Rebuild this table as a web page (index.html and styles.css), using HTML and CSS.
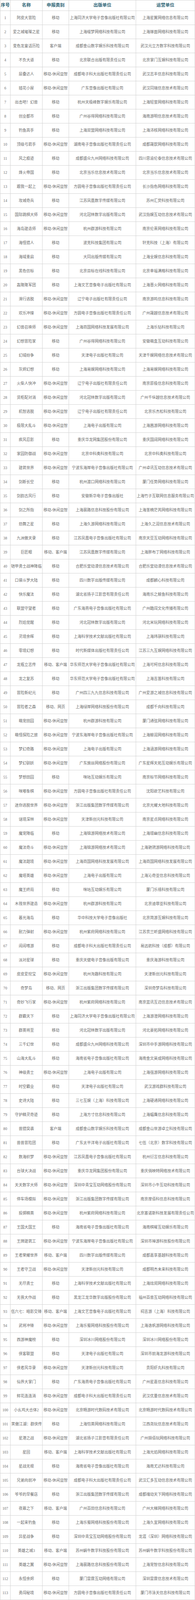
FILE: index.html
```html
<!DOCTYPE html>
<html lang="zh-CN">
<head>
<meta charset="utf-8">
<title>游戏审批名单</title>
<link rel="stylesheet" href="styles.css">
</head>
<body>
<table class="sheet">
<thead>
<tr class="head"><th>序号</th><th>名称</th><th>申报类别</th><th>出版单位</th><th>运营单位</th></tr>
</thead>
<tbody>
<tr><td>1</td><td>阿皮大冒险</td><td>移动</td><td>上海同济大学电子音像出版社有限公司</td><td>上海星翼网络信息有限公司</td></tr>
<tr><td>2</td><td>爱之城璀璨之星</td><td>移动</td><td>上海缇梦网络科技有限公司</td><td>上海琢面网络科技有限公司</td></tr>
<tr><td>3</td><td>变色龙童话历险</td><td>客户端</td><td>成都金山数字娱乐科技有限公司</td><td>武汉元立方数字科技有限公司</td></tr>
<tr><td>4</td><td>不负大道</td><td>移动</td><td>北京联合出版有限责任公司</td><td>北京掌门互娱科技有限公司</td></tr>
<tr><td>5</td><td>层叠达人</td><td>移动-休闲益智</td><td>成都电子科大出版社有限责任公司</td><td>武汉志丰信息科技有限公司</td></tr>
<tr><td>6</td><td>插花小屋</td><td>移动-休闲益智</td><td>广东音像出版社有限公司</td><td>武汉同瑞信息技术有限公司</td></tr>
<tr><td>7</td><td>出击吧！幻兽</td><td>移动</td><td>杭州天极峰数字娱乐有限公司</td><td>上海轻萤网络科技有限公司</td></tr>
<tr><td>8</td><td>创业都市</td><td>移动</td><td>广州谷得网络科技有限公司</td><td>海南游明信息技术有限公司</td></tr>
<tr><td>9</td><td>钓鱼高手</td><td>移动</td><td>上海双盟网络科技有限公司</td><td>上海沛核网络科技有限公司</td></tr>
<tr><td>10</td><td>顶级弓箭手</td><td>移动-休闲益智</td><td>湖南电子音像出版社有限责任公司</td><td>成都晟歆网络科技有限公司</td></tr>
<tr><td>11</td><td>风之痕迹</td><td>移动</td><td>成都盛众九州网络科技有限公司</td><td>四川思渝伦泰信息技术有限公司</td></tr>
<tr><td>12</td><td>烽火帝国</td><td>移动</td><td>北京当乐信息技术有限公司</td><td>北京当乐信息技术有限公司</td></tr>
<tr><td>13</td><td>跟我一起上</td><td>移动-休闲益智</td><td>方圆电子音像出版社有限责任公司</td><td>长沙指色网络科技有限公司</td></tr>
<tr><td>14</td><td>攻城奇兵</td><td>移动</td><td>江苏凤凰数字传媒有限公司</td><td>苏州汇荧科技有限公司</td></tr>
<tr><td>15</td><td>国际跳棋大师</td><td>移动-休闲益智</td><td>河北冠林数字出版有限公司</td><td>武汉指娱互动信息技术有限公司</td></tr>
<tr><td>16</td><td>海岛建造师</td><td>移动-休闲益智</td><td>杭州群游科技有限公司</td><td>南京伦熹网络科技有限公司</td></tr>
<tr><td>17</td><td>海怪猎人</td><td>移动</td><td>波克科技集团有限公司</td><td>轩克科技（上海）有限公司</td></tr>
<tr><td>18</td><td>海域重启</td><td>移动</td><td>大同出版传媒有限公司</td><td>上海全娱信息科技有限公司</td></tr>
<tr><td>19</td><td>黑色信标</td><td>移动</td><td>北京目标在线科技有限公司</td><td>北京幸福满格科技有限公司</td></tr>
<tr><td>20</td><td>轰隆隆军团</td><td>移动</td><td>上海文艺音像电子出版社有限公司</td><td>上海晋火网络科技有限公司</td></tr>
<tr><td>21</td><td>滑行逃脱</td><td>移动-休闲益智</td><td>辽宁电子出版社有限责任公司</td><td>南京游鸣信息科技有限公司</td></tr>
<tr><td>22</td><td>欢乐冲撞</td><td>移动-休闲益智</td><td>方圆电子音像出版社有限责任公司</td><td>广州晟越信息技术有限公司</td></tr>
<tr><td>23</td><td>幻兽召唤师</td><td>移动-休闲益智</td><td>上海商国网络科技发展有限公司</td><td>上海乐钻科技有限公司</td></tr>
<tr><td>24</td><td>幻想冒险家</td><td>移动</td><td>广州谷得网络科技有限公司</td><td>安徽萌盒互动科技有限公司</td></tr>
<tr><td>25</td><td>幻域纷争</td><td>移动</td><td>天津电子出版社有限公司</td><td>天津千娱网络信息技术有限公司</td></tr>
<tr><td>26</td><td>灰烬幻想</td><td>移动</td><td>上海易娱网络科技有限公司</td><td>上海易娱网络科技有限公司</td></tr>
<tr><td>27</td><td>火柴人快冲</td><td>移动-休闲益智</td><td>辽宁电子出版社有限责任公司</td><td>南京原极信息科技有限公司</td></tr>
<tr><td>28</td><td>货柜配对消</td><td>移动-休闲益智</td><td>河北冠林数字出版有限公司</td><td>广州千纵越信息技术有限公司</td></tr>
<tr><td>29</td><td>机智逃脱</td><td>移动-休闲益智</td><td>辽宁电子出版社有限责任公司</td><td>北京乐杰松科技有限公司</td></tr>
<tr><td>30</td><td>极限大乱斗</td><td>移动-休闲益智</td><td>上海电子出版有限公司</td><td>上海茜游网络科技有限公司</td></tr>
<tr><td>31</td><td>疾风忍影</td><td>移动</td><td>重庆华龙网集团股份有限公司</td><td>重庆国阔网络科技有限公司</td></tr>
<tr><td>32</td><td>家园防御战</td><td>移动-休闲益智</td><td>北京中科奥科技有限公司</td><td>北京中科奥科技有限公司</td></tr>
<tr><td>33</td><td>建筑世界</td><td>移动-休闲益智</td><td>宁波东海岸电子音像出版社有限公司</td><td>广州卓讯互动信息技术有限公司</td></tr>
<tr><td>34</td><td>剑断长空</td><td>移动</td><td>杭州渡口网络科技有限公司</td><td>厦门任势网络科技有限公司</td></tr>
<tr><td>35</td><td>剑韵古风行</td><td>移动</td><td>安徽新华电子音像出版社</td><td>上海竹子互联网信息服务有限公司</td></tr>
<tr><td>36</td><td>剑之所指</td><td>移动-休闲益智</td><td>上海晨路信息科技股份有限公司</td><td>上海茎楠茫芮网络科技有限公司</td></tr>
<tr><td>37</td><td>劲舞之星</td><td>移动</td><td>上海久游网络科技有限公司</td><td>上海久之润信息技术有限公司</td></tr>
<tr><td>38</td><td>九洲傲天录</td><td>移动</td><td>江苏凤凰电子音像出版社有限公司</td><td>南京天豆互动网络科技有限公司</td></tr>
<tr><td>39</td><td>巨匠眼</td><td>移动、客户端</td><td>江苏凤凰数字传媒有限公司</td><td>上海胖布丁网络科技有限公司</td></tr>
<tr><td>40</td><td>铠甲勇士战神降临</td><td>移动</td><td>合肥乐堂动漫信息技术有限公司</td><td>合肥乐堂动漫信息技术有限公司</td></tr>
<tr><td>41</td><td>口袋斗罗大陆</td><td>移动</td><td>四川数字出版传媒有限公司</td><td>成都麟心科技有限公司</td></tr>
<tr><td>42</td><td>快乐魔法</td><td>移动</td><td>湖北省扬子江影音有限责任公司</td><td>海南乐之鲸鱼科技有限公司</td></tr>
<tr><td>43</td><td>联盟守望者</td><td>移动</td><td>广东海燕电子音像出版社有限公司</td><td>广州酷闯文化传播有限公司</td></tr>
<tr><td>44</td><td>烈焰觉醒</td><td>移动</td><td>河北冠林数字出版有限公司</td><td>河北米玩网络科技有限公司</td></tr>
<tr><td>45</td><td>灵境余晖</td><td>移动</td><td>上海科学技术文献出版社有限公司</td><td>上海玮骐科技有限公司</td></tr>
<tr><td>46</td><td>零境幻想</td><td>移动</td><td>时代新媒体出版社有限责任公司</td><td>江苏三九互娱网络科技有限公司</td></tr>
<tr><td>47</td><td>龙瓶立志传</td><td>移动、客户端</td><td>华东师范大学电子音像出版社有限公司</td><td>上海可柯信息科技有限公司</td></tr>
<tr><td>48</td><td>龙之复苏</td><td>移动</td><td>华东师范大学电子音像出版社有限公司</td><td>上海吉笛科技有限公司</td></tr>
<tr><td>49</td><td>冒险新纪元</td><td>移动</td><td>广州四三九九信息科技有限公司</td><td>广州爱游之城信息科技有限公司</td></tr>
<tr><td>50</td><td>冒险者之森</td><td>移动、网页</td><td>上海绿岸网络科技股份有限公司</td><td>成都千向科技有限公司</td></tr>
<tr><td>51</td><td>萌宠田园</td><td>移动-休闲益智</td><td>杭州群游科技有限公司</td><td>厦门通弦网络科技有限公司</td></tr>
<tr><td>52</td><td>萌怪探险之旅</td><td>移动-休闲益智</td><td>宁波东海岸电子音像出版社有限公司</td><td>上海鲸润网络科技有限公司</td></tr>
<tr><td>53</td><td>梦幻奇路</td><td>移动-休闲益智</td><td>上海电子出版有限公司</td><td>上海涵游网络科技有限公司</td></tr>
<tr><td>54</td><td>梦幻驯妖</td><td>移动-休闲益智</td><td>广东施燚网络股份有限公司</td><td>广东星辉天拓互动娱乐有限公司</td></tr>
<tr><td>55</td><td>梦想田园</td><td>移动</td><td>咪咕互动娱乐有限公司</td><td>南京标节网络科技有限公司</td></tr>
<tr><td>56</td><td>咪嘟象棋</td><td>移动-休闲益智</td><td>方圆电子音像出版社有限责任公司</td><td>沈阳欲艺科技有限公司</td></tr>
<tr><td>57</td><td>迷你逃脱世界</td><td>移动-休闲益智</td><td>浙江出版集团数字传媒有限公司</td><td>北京光耀大地科技有限公司</td></tr>
<tr><td>58</td><td>谜境深林</td><td>移动-休闲益智</td><td>天津新创元科技有限公司</td><td>南京星点网络科技有限公司</td></tr>
<tr><td>59</td><td>魔宠降临</td><td>移动</td><td>上海锦游网络技术有限公司</td><td>上海璟幽信息科技有限公司</td></tr>
<tr><td>60</td><td>魔法奇斗</td><td>移动-休闲益智</td><td>上海锦游网络技术有限公司</td><td>上海驰骋游网络科技有限公司</td></tr>
<tr><td>61</td><td>魔法甜境</td><td>移动-休闲益智</td><td>上海商国网络科技发展有限公司</td><td>上海商国网络科技发展有限公司</td></tr>
<tr><td>62</td><td>魔塔英雄</td><td>移动-休闲益智</td><td>上海电子出版有限公司</td><td>上海沁奇亚信息科技有限公司</td></tr>
<tr><td>63</td><td>魔王终局</td><td>移动</td><td>咪咕互动娱乐有限公司</td><td>厦门乐禧科技有限公司</td></tr>
<tr><td>64</td><td>木筏世界建造</td><td>移动-休闲益智</td><td>杭州群游科技有限公司</td><td>北京迪菲亚科技有限公司</td></tr>
<tr><td>65</td><td>暮光海岛</td><td>移动</td><td>华中科技大学电子音像出版社</td><td>北京简游互娱科技有限公司</td></tr>
<tr><td>66</td><td>耐力弹射</td><td>移动-休闲益智</td><td>杭州紫府网络科技有限公司</td><td>江苏贯兰昕盛网络科技有限公司</td></tr>
<tr><td>67</td><td>闹闹嗜游</td><td>移动</td><td>成都电子科大出版社有限责任公司</td><td>易远航科技（成都）有限公司</td></tr>
<tr><td>68</td><td>派对星球</td><td>移动</td><td>重庆天健电子音像出版有限公司</td><td>重庆海游科技有限公司</td></tr>
<tr><td>69</td><td>皮皮爱挖宝</td><td>移动-休闲益智</td><td>杭州洵趣科技有限公司</td><td>天津新创元科技有限公司</td></tr>
<tr><td>70</td><td>奇梦岛</td><td>移动、网页</td><td>浙江出版集团数字传媒有限公司</td><td>深圳奇梦岛科技有限公司</td></tr>
<tr><td>71</td><td>奇妙飞行家</td><td>移动-休闲益智</td><td>杭州紫府网络科技有限公司</td><td>南京蓝讯互迈信息技术有限公司</td></tr>
<tr><td>72</td><td>群霸天下</td><td>移动</td><td>上海同济大学电子音像出版社有限公司</td><td>上海游澄网络科技有限公司</td></tr>
<tr><td>73</td><td>群英将至</td><td>移动</td><td>河北冠林数字出版有限公司</td><td>河北豪拓网络科技有限公司</td></tr>
<tr><td>74</td><td>三千幻世</td><td>移动</td><td>成都盛众九州网络科技有限公司</td><td>深圳市中手游网络科技有限公司</td></tr>
<tr><td>75</td><td>山海大乱斗</td><td>移动</td><td>海南省电子音像出版社有限公司</td><td>海南金文昊成网络科技有限公司</td></tr>
<tr><td>76</td><td>神级勇士</td><td>移动-休闲益智</td><td>上海电子出版有限公司</td><td>上海强游网络科技有限公司</td></tr>
<tr><td>77</td><td>时空霸业</td><td>移动</td><td>天津电子出版社有限公司</td><td>武汉游戏群科技有限公司</td></tr>
<tr><td>78</td><td>史诗大陆</td><td>移动</td><td>三七互娱（上海）科技有限公司</td><td>上海硬通网络科技有限公司</td></tr>
<tr><td>79</td><td>守护精灵奇迹</td><td>移动</td><td>上海方寸信息科技有限公司</td><td>上海蝠鹰信息科技有限公司</td></tr>
<tr><td>80</td><td>兽猎突袭</td><td>客户端</td><td>成都金山数字娱乐科技有限公司</td><td>成都金山世游卓立科技有限公司</td></tr>
<tr><td>81</td><td>兽兽冒险团</td><td>移动</td><td>广东太平洋电子出版社有限公司</td><td>七伍（北京）数字科技有限公司</td></tr>
<tr><td>82</td><td>数海织梦</td><td>移动-休闲益智</td><td>江苏凤凰电子音像出版社有限公司</td><td>杭州衍言信息科技有限公司</td></tr>
<tr><td>83</td><td>台球大决战</td><td>移动-休闲益智</td><td>重庆华龙网集团股份有限公司</td><td>重庆俏映特网络技术有限公司</td></tr>
<tr><td>84</td><td>天天数字大师</td><td>移动-休闲益智</td><td>深圳中青宝互动网络股份有限公司</td><td>深圳市小牛互动科技有限公司</td></tr>
<tr><td>85</td><td>停车场模拟</td><td>移动-休闲益智</td><td>浙江出版集团数字传媒有限公司</td><td>南京摩佰科信息科技有限公司</td></tr>
<tr><td>86</td><td>投掷精英</td><td>移动-休闲益智</td><td>杭州紫府网络科技有限公司</td><td>北京塞诺斯科技发展有限责任公司</td></tr>
<tr><td>87</td><td>王国大国王</td><td>移动</td><td>海南省电子音像出版社有限公司</td><td>海南棋曜互动娱乐有限公司</td></tr>
<tr><td>88</td><td>王牌建筑工</td><td>移动-休闲益智</td><td>宁波东海岸电子音像出版社有限公司</td><td>深圳市禅游科技股份有限公司</td></tr>
<tr><td>89</td><td>王者荣耀世界</td><td>移动、客户端</td><td>四川数字出版传媒有限公司</td><td>成都嘉享基越科技有限公司</td></tr>
<tr><td>90</td><td>王者守卫战</td><td>移动-休闲益智</td><td>天津新创元科技有限公司</td><td>成都明杰未来科技有限公司</td></tr>
<tr><td>91</td><td>无尽勇士</td><td>移动</td><td>上海科学技术文献出版社有限公司</td><td>上海炫闵网络科技有限公司</td></tr>
<tr><td>92</td><td>无畏大作战</td><td>移动</td><td>黑龙江龙华数字出版股份有限公司</td><td>福州百兽互动网络科技有限公司</td></tr>
<tr><td>93</td><td>伍六七：暗影交锋</td><td>移动、客户端</td><td>上海文艺音像电子出版社有限公司</td><td>祠吉游（上海）科技有限公司</td></tr>
<tr><td>94</td><td>武将冲锋</td><td>移动-休闲益智</td><td>上海乐蜀网络科技股份有限公司</td><td>上海逸帆游网络科技有限公司</td></tr>
<tr><td>95</td><td>西游神魔榜</td><td>移动</td><td>深圳冰川网络股份有限公司</td><td>深圳冰川网络股份有限公司</td></tr>
<tr><td>96</td><td>侠客联盟</td><td>移动</td><td>天津电子出版社有限公司</td><td>深圳市前海龙游科技有限公司</td></tr>
<tr><td>97</td><td>侠者风华录</td><td>移动-休闲益智</td><td>天津新创元科技有限公司</td><td>贵阳虾丸科技有限公司</td></tr>
<tr><td>98</td><td>仙界大掌门</td><td>移动</td><td>广东海燕电子音像出版社有限公司</td><td>广州星嘉信息科技有限公司</td></tr>
<tr><td>99</td><td>鲜花连连消</td><td>移动-休闲益智</td><td>成都电子科大出版社有限责任公司</td><td>武汉优量信息技术有限公司</td></tr>
<tr><td>100</td><td>小幺鸡大合体2</td><td>移动-休闲益智</td><td>北京畅游时代数码技术有限公司</td><td>北京畅游时代数码技术有限公司</td></tr>
<tr><td>101</td><td class="clip">笑傲江湖：群侠传</td><td>移动</td><td>上海恺英网络科技有限公司</td><td>江西尧玩信息技术有限公司</td></tr>
<tr><td>102</td><td>星港之战</td><td>移动-休闲益智</td><td>湖北省扬子江影音有限责任公司</td><td>广州撷佰玩网络科技有限公司</td></tr>
<tr><td>103</td><td>星回</td><td>移动、客户端</td><td>上海科学技术文献出版社有限公司</td><td>上海光焰网络科技有限公司</td></tr>
<tr><td>104</td><td>星战无垠</td><td>移动</td><td>海南省电子音像出版社有限公司</td><td>海南尤达科技有限公司</td></tr>
<tr><td>105</td><td>兄弟向前冲</td><td>移动-休闲益智</td><td>成都电子科大出版社有限责任公司</td><td>武汉汇多互动信息技术有限公司</td></tr>
<tr><td>106</td><td>爷爷的早餐店</td><td>移动</td><td>浙江出版集团数字传媒有限公司</td><td>成都魂动天下网络科技有限公司</td></tr>
<tr><td>107</td><td>夜幕之下</td><td>移动、客户端</td><td>广州百田信息科技有限公司</td><td>广州大梯网络科技有限公司</td></tr>
<tr><td>108</td><td>一起来钓鱼</td><td>移动</td><td>上海乐蜀网络科技股份有限公司</td><td>上海久宜网络科技有限公司</td></tr>
<tr><td>109</td><td>异星战争</td><td>移动</td><td>深圳中青宝互动网络股份有限公司</td><td>龙涯（深圳）网络科技有限公司</td></tr>
<tr><td>110</td><td>英雄之城3</td><td>移动、客户端</td><td>苏州蜗牛数字科技股份有限公司</td><td>苏州蜗牛数字科技股份有限公司</td></tr>
<tr><td>111</td><td>英雄之翼</td><td>移动-休闲益智</td><td>上海晨路信息科技股份有限公司</td><td>上海宠智信息科技有限公司</td></tr>
<tr><td>112</td><td>永恒余烬</td><td>移动</td><td>厦门雷霆互动网络有限公司</td><td>深圳雷霆信息技术有限公司</td></tr>
<tr><td>113</td><td>勇闯秘境</td><td>移动-休闲益智</td><td>方圆电子音像出版社有限责任公司</td><td>厦门市泳天信息科技有限公司</td></tr>
<tr><td>114</td><td>元启世界</td><td>移动-休闲益智</td><td>金报电子音像出版（北京）有限公司</td><td>北京琥珀金源传媒有限公司</td></tr>
<tr><td>115</td><td>战将出征</td><td>移动-休闲益智</td><td>上海晨路信息科技股份有限公司</td><td>上海文擎瑞玥网络科技有限公司</td></tr>
<tr><td>116</td><td>战栗绝境</td><td>客户端</td><td>四川数字出版传媒有限公司</td><td>成都数字天空科技有限公司</td></tr>
<tr><td>117</td><td>战神西游</td><td>移动-休闲益智</td><td>天津新创元科技有限公司</td><td>南阳铭薇软件有限公司</td></tr>
<tr><td>118</td><td>战争警戒</td><td>移动、客户端</td><td>上海同济大学电子音像出版社有限公司</td><td>上海冒险岛信息技术有限公司</td></tr>
<tr><td>119</td><td>谪仙异闻录</td><td>移动</td><td>上海商国网络科技发展有限公司</td><td>上海都玩网络科技有限公司</td></tr>
<tr><td>120</td><td>指尖漂移王者</td><td>移动-休闲益智</td><td>杭州紫府网络科技有限公司</td><td>北京瑞璨互联科技有限公司</td></tr>
<tr><td>121</td><td>指尖王国</td><td>移动</td><td>成都盛众九州网络科技有限公司</td><td>深圳市墨和科技有限公司</td></tr>
<tr><td>122</td><td>逐个击破</td><td>移动-休闲益智</td><td>辽宁电子出版社有限责任公司</td><td>杭州齐趣科技有限公司</td></tr>
<tr><td>123</td><td>纵横消消乐</td><td>移动-休闲益智</td><td>上海商国网络科技发展有限公司</td><td>上海亿柠网络科技有限公司</td></tr>
</tbody>
</table>
</body>
</html>
```

FILE: styles.css
```css
html, body {
  margin: 0;
  padding: 0;
  background: #ffffff;
}

.sheet {
  display: block;
  width: 500px;
  border-spacing: 0;
  font-family: "Liberation Serif", "Noto Sans CJK SC", serif;
}

.sheet thead,
.sheet tbody {
  display: block;
}

.sheet tr {
  display: grid;
  grid-template-columns: 27px 82px 68px 172px 151px;
  height: 36px;
}

.sheet tr.head {
  height: 28px;
}

.sheet th,
.sheet td {
  display: flex;
  align-items: center;
  justify-content: center;
  box-sizing: border-box;
  min-width: 0;
  padding: 0;
  border-right: 1px solid #d3d3d3;
  border-bottom: 1px solid #d3d3d3;
  white-space: nowrap;
  line-height: 1.2;
}

.sheet th:first-child,
.sheet td:first-child {
  border-left: 1px solid #d3d3d3;
}

.sheet tr.head th {
  border-top: 1px solid #d3d3d3;
  font-size: 11.5px;
  font-weight: bold;
  color: #2e6476;
}

.sheet td {
  font-size: 9.8px;
  color: #6e6e6e;
}

.sheet td.clip {
  justify-content: flex-start;
  padding-left: 2px;
  overflow: hidden;
}
```
